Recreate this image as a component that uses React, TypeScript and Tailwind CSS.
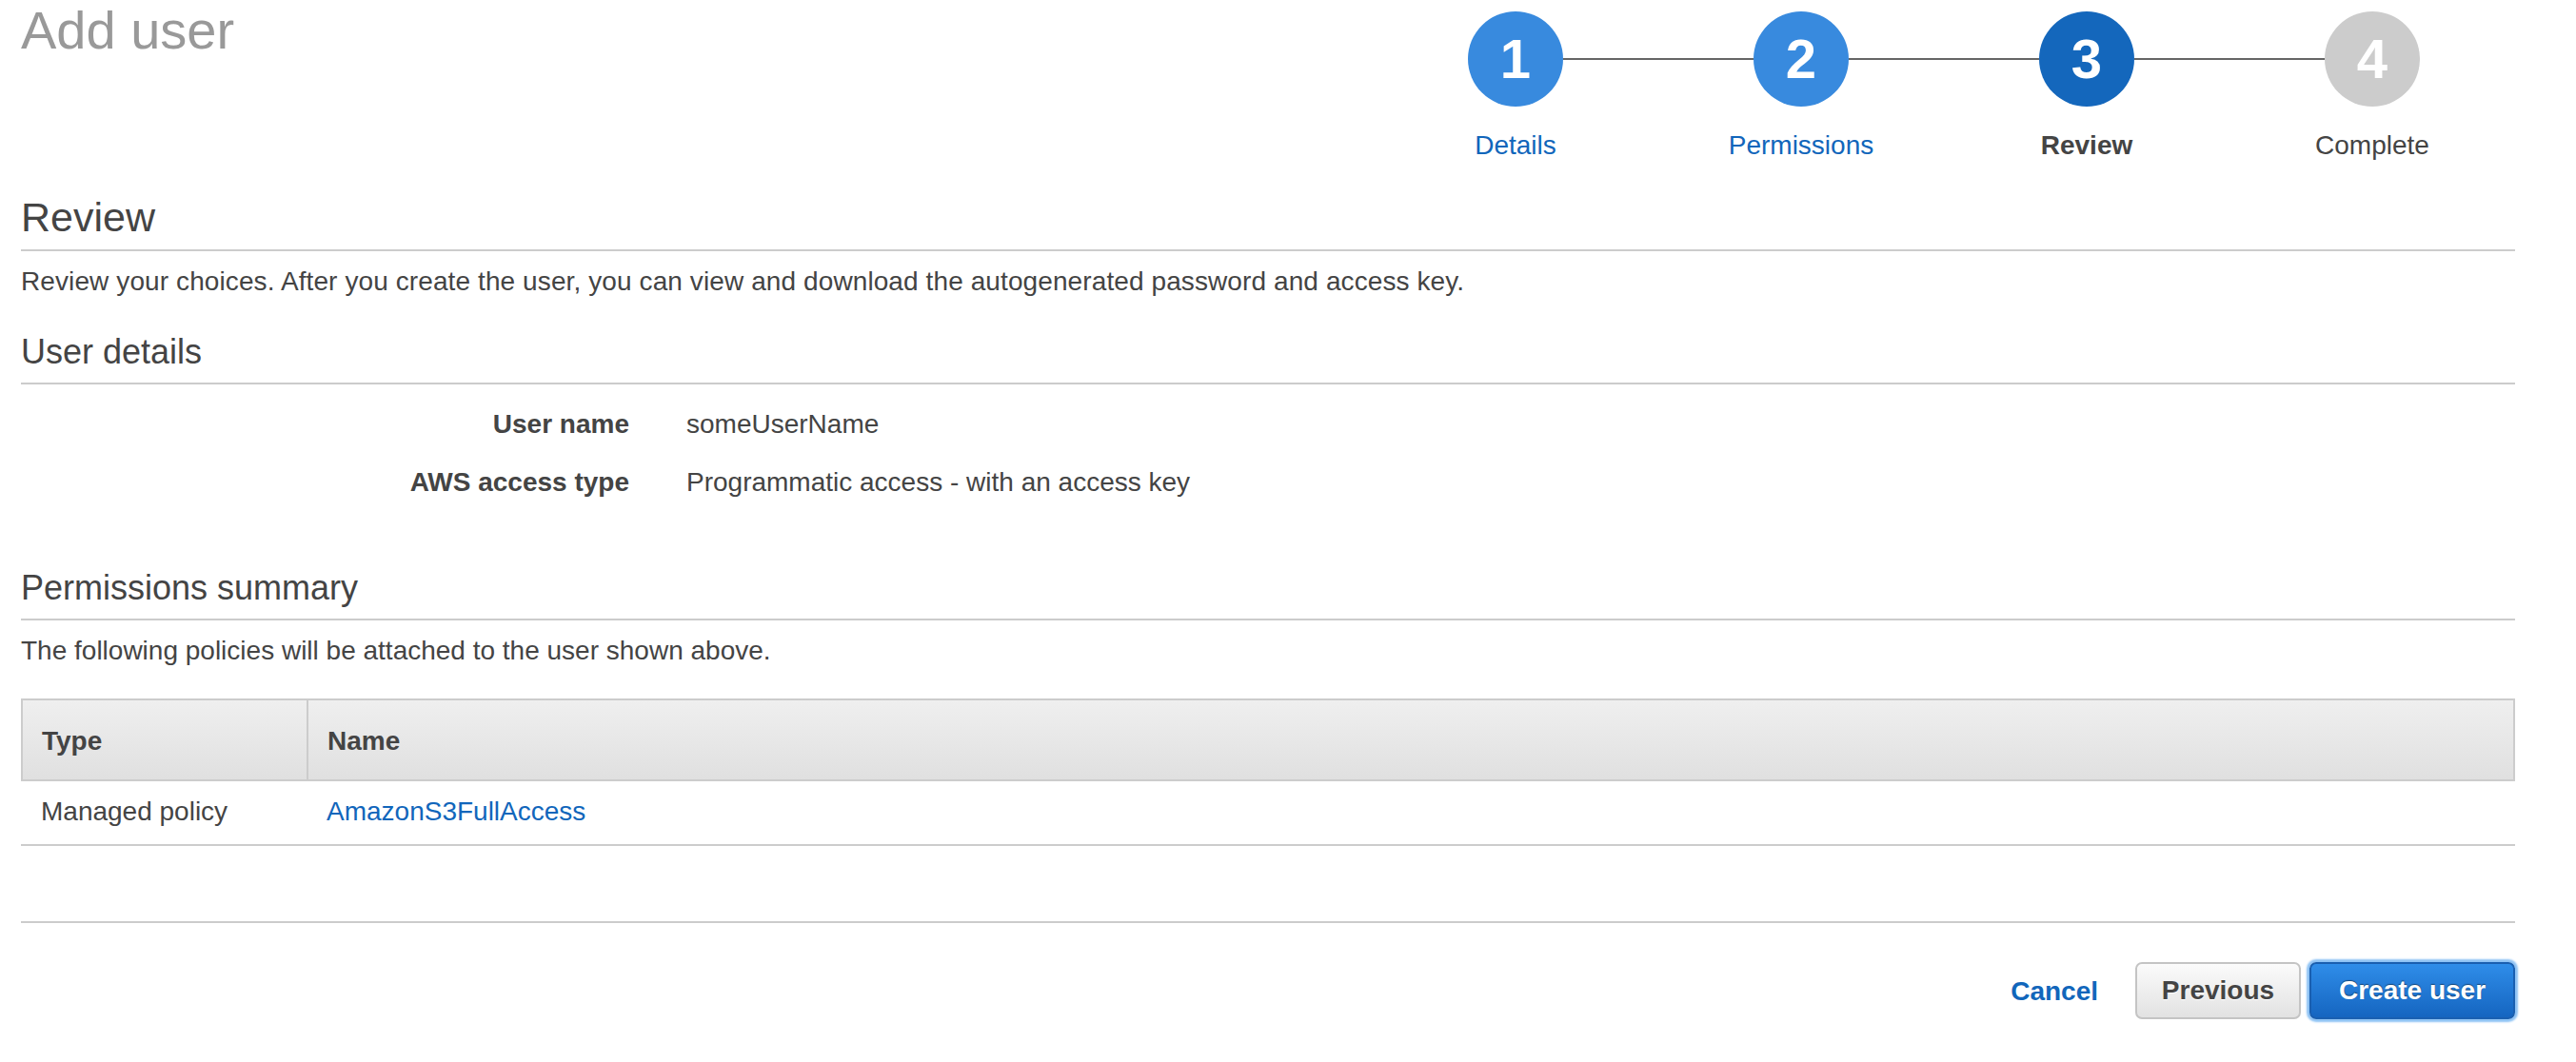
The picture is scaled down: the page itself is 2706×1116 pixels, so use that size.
const steps = [
  { n: "1", label: "Details", circle: "bg-[#388ade]", text: "text-[#1166bb]" },
  { n: "2", label: "Permissions", circle: "bg-[#388ade]", text: "text-[#1166bb]" },
  { n: "3", label: "Review", circle: "bg-[#1467bc]", text: "text-[#444] font-bold" },
  { n: "4", label: "Complete", circle: "bg-[#cccccc]", text: "text-[#444]" },
];

function Stepper() {
  return (
    <div className="w-[1200px] shrink-0">
      <div className="flex items-center px-[100px] pt-[12px]">
        {steps.map((s, i) => (
          <div key={s.n} className={`flex items-center ${i < steps.length - 1 ? "flex-1" : ""}`}>
            <div
              className={`w-[100px] h-[100px] rounded-full ${s.circle} flex items-center justify-center text-white font-bold text-[58px] leading-none`}
            >
              {s.n}
            </div>
            {i < steps.length - 1 && <div className="flex-1 h-[2px] bg-[#666]" />}
          </div>
        ))}
      </div>
      <div className="grid grid-cols-4 mt-[21px]">
        {steps.map((s) => (
          <div key={s.n} className={`text-center ${s.text}`}>
            {s.label}
          </div>
        ))}
      </div>
    </div>
  );
}

function DetailRow({ label, value }: { label: string; value: string }) {
  return (
    <div className="flex">
      <div className="w-[639px] text-right font-bold">{label}</div>
      <div className="ml-[60px]">{value}</div>
    </div>
  );
}

export default function App() {
  return (
    <div className="min-h-screen bg-white font-['Liberation_Sans',Arial,sans-serif] text-[#444] text-[28px] leading-[40px]">
      <div className="pl-[22px] pr-[64px]">
        <header className="flex justify-between items-start">
          <h1 className="text-[56px] leading-[64px] text-[#999]">Add user</h1>
          <Stepper />
        </header>

        <h2 className="mt-[29px] text-[43px] leading-[52px] pb-[8px] border-b-2 border-[#ccc]">Review</h2>
        <p className="mt-[12px] tracking-[0.1px]">
          Review your choices. After you create the user, you can view and download the autogenerated password and
          access key.
        </p>

        <h3 className="mt-[32px] text-[36px] leading-[44px] pb-[10px] border-b-2 border-[#ccc]">User details</h3>
        <div className="mt-[22px] flex flex-col gap-[21px]">
          <DetailRow label="User name" value="someUserName" />
          <DetailRow label="AWS access type" value="Programmatic access - with an access key" />
        </div>

        <h3 className="mt-[69px] text-[36px] leading-[44px] pb-[10px] border-b-2 border-[#ccc]">
          Permissions summary
        </h3>
        <p className="mt-[12px]">The following policies will be attached to the user shown above.</p>

        <div className="mt-[30px]">
          <div className="grid grid-cols-[298px_1fr] border-2 border-[#ccc] bg-linear-to-b from-[#efefef] to-[#e0e0e0] font-bold">
            <div className="h-[83px] flex items-center pl-[20px] pt-[2px]">Type</div>
            <div className="h-[83px] flex items-center pl-[20px] pt-[2px] border-l-2 border-[#ccc]">Name</div>
          </div>
          <div className="grid grid-cols-[300px_1fr] border-b-2 border-[#ccc]">
            <div className="pl-[21px] pt-[12px] pb-[14px]">Managed policy</div>
            <div className="pl-[21px] pt-[12px] pb-[14px] text-[#1166bb]">AmazonS3FullAccess</div>
          </div>
        </div>

        <div className="mt-[79px] border-t-2 border-[#ccc]" />

        <div className="mt-[41px] flex items-center justify-end">
          <button className="font-bold text-[#1166bb] mr-[39px] pt-[2px]">Cancel</button>
          <button className="w-[174px] h-[60px] rounded-[7px] border-2 border-[#c4c4c4] bg-linear-to-b from-[#fbfbfb] to-[#e2e2e2] font-bold text-[#444] [text-shadow:0_1px_0_#fff]">
            Previous
          </button>
          <button className="ml-[9px] w-[216px] h-[60px] rounded-[7px] border-2 border-[#1a5fb0] bg-linear-to-b from-[#2f8de9] to-[#1565c0] font-bold text-white shadow-[0_0_2px_3px_#8ec3f5] [text-shadow:0_-1px_1px_rgba(0,0,0,0.45)]">
            Create user
          </button>
        </div>
      </div>
    </div>
  );
}
